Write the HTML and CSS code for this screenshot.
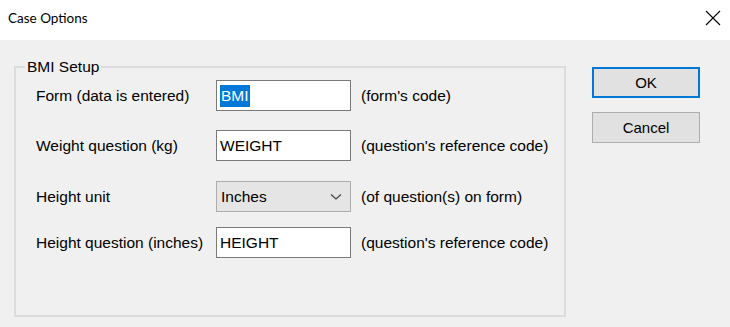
FILE: index.html
```html
<!DOCTYPE html>
<html lang="en">
<head>
    <meta charset="UTF-8">
    <title>Case Options</title>
    <link rel="stylesheet" href="styles.css">
</head>
<body>
    <div class="dialog">
        <div class="titlebar">
            <span class="title">Case Options</span>
            <svg class="close" width="16" height="16" viewBox="0 0 16 16">
                <path d="M1 1 L15 15 M15 1 L1 15" stroke="#000" stroke-width="1.1" fill="none"/>
            </svg>
        </div>
        <div class="content">
            <fieldset class="group">
                <legend>BMI Setup</legend>
                <div class="row">
                    <label>Form (data is entered)</label>
                    <div class="field"><span class="selected">BMI</span></div>
                    <span class="hint">(form's code)</span>
                </div>
                <div class="row">
                    <label>Weight question (kg)</label>
                    <div class="field">WEIGHT</div>
                    <span class="hint">(question's reference code)</span>
                </div>
                <div class="row">
                    <label>Height unit</label>
                    <div class="field combo">
                        <span>Inches</span>
                        <svg width="12" height="8" viewBox="0 0 12 8">
                            <path d="M1 1.5 L6 6 L11 1.5" stroke="#444" stroke-width="1.2" fill="none"/>
                        </svg>
                    </div>
                    <span class="hint">(of question(s) on form)</span>
                </div>
                <div class="row">
                    <label>Height question (inches)</label>
                    <div class="field">HEIGHT</div>
                    <span class="hint">(question's reference code)</span>
                </div>
            </fieldset>
            <div class="buttons">
                <button class="btn default">OK</button>
                <button class="btn">Cancel</button>
            </div>
        </div>
    </div>
</body>
</html>
```

FILE: styles.css
```css
body {
    margin: 0;
    font-family: 'Liberation Sans', Arial, sans-serif;
    font-size: 15.5px;
    color: #000;
    background-color: #f0f0f0;
}

.dialog {
    width: 730px;
    height: 327px;
    display: flex;
    flex-direction: column;
}

.titlebar {
    height: 40px;
    background-color: #fff;
    display: flex;
    align-items: center;
    justify-content: space-between;
    padding: 0 9px 4px 8px;
    box-sizing: border-box;
}

.title {
    font-family: Lato, 'Liberation Sans', sans-serif;
    font-size: 13.5px;
}

.content {
    flex: 1;
    display: flex;
    padding: 18px 0 0 14px;
}

.group {
    width: 552px;
    height: 259px;
    box-sizing: border-box;
    margin: 0;
    padding: 4px 0 0 20px;
    border: 2px solid #dcdcdc;
}

.group legend {
    padding: 0 2px;
    margin-left: -11px;
}

.row {
    display: grid;
    grid-template-columns: 170px 135px auto;
    align-items: center;
    column-gap: 10px;
    margin-bottom: 19px;
}

.row:nth-of-type(2) {
    margin-bottom: 20px;
}

.row:nth-of-type(3) {
    margin-bottom: 15px;
}

.field {
    height: 31px;
    box-sizing: border-box;
    border: 1px solid #7a7a7a;
    background-color: #fff;
    display: flex;
    align-items: center;
    padding-left: 3px;
}

.selected {
    background-color: #0078d7;
    color: #fff;
    padding: 2px 1px;
}

.combo {
    background-color: #e5e5e5;
    border-color: #adadad;
    justify-content: space-between;
    padding: 0 8px 0 4px;
}

.buttons {
    display: flex;
    flex-direction: column;
    gap: 14px;
    margin: 9px 0 0 26px;
}

.btn {
    width: 108px;
    height: 31px;
    font-family: inherit;
    font-size: 15px;
    color: #000;
    background-color: #e1e1e1;
    border: 1px solid #adadad;
    padding: 0;
}

.btn.default {
    border: 2px solid #0078d7;
}
```
